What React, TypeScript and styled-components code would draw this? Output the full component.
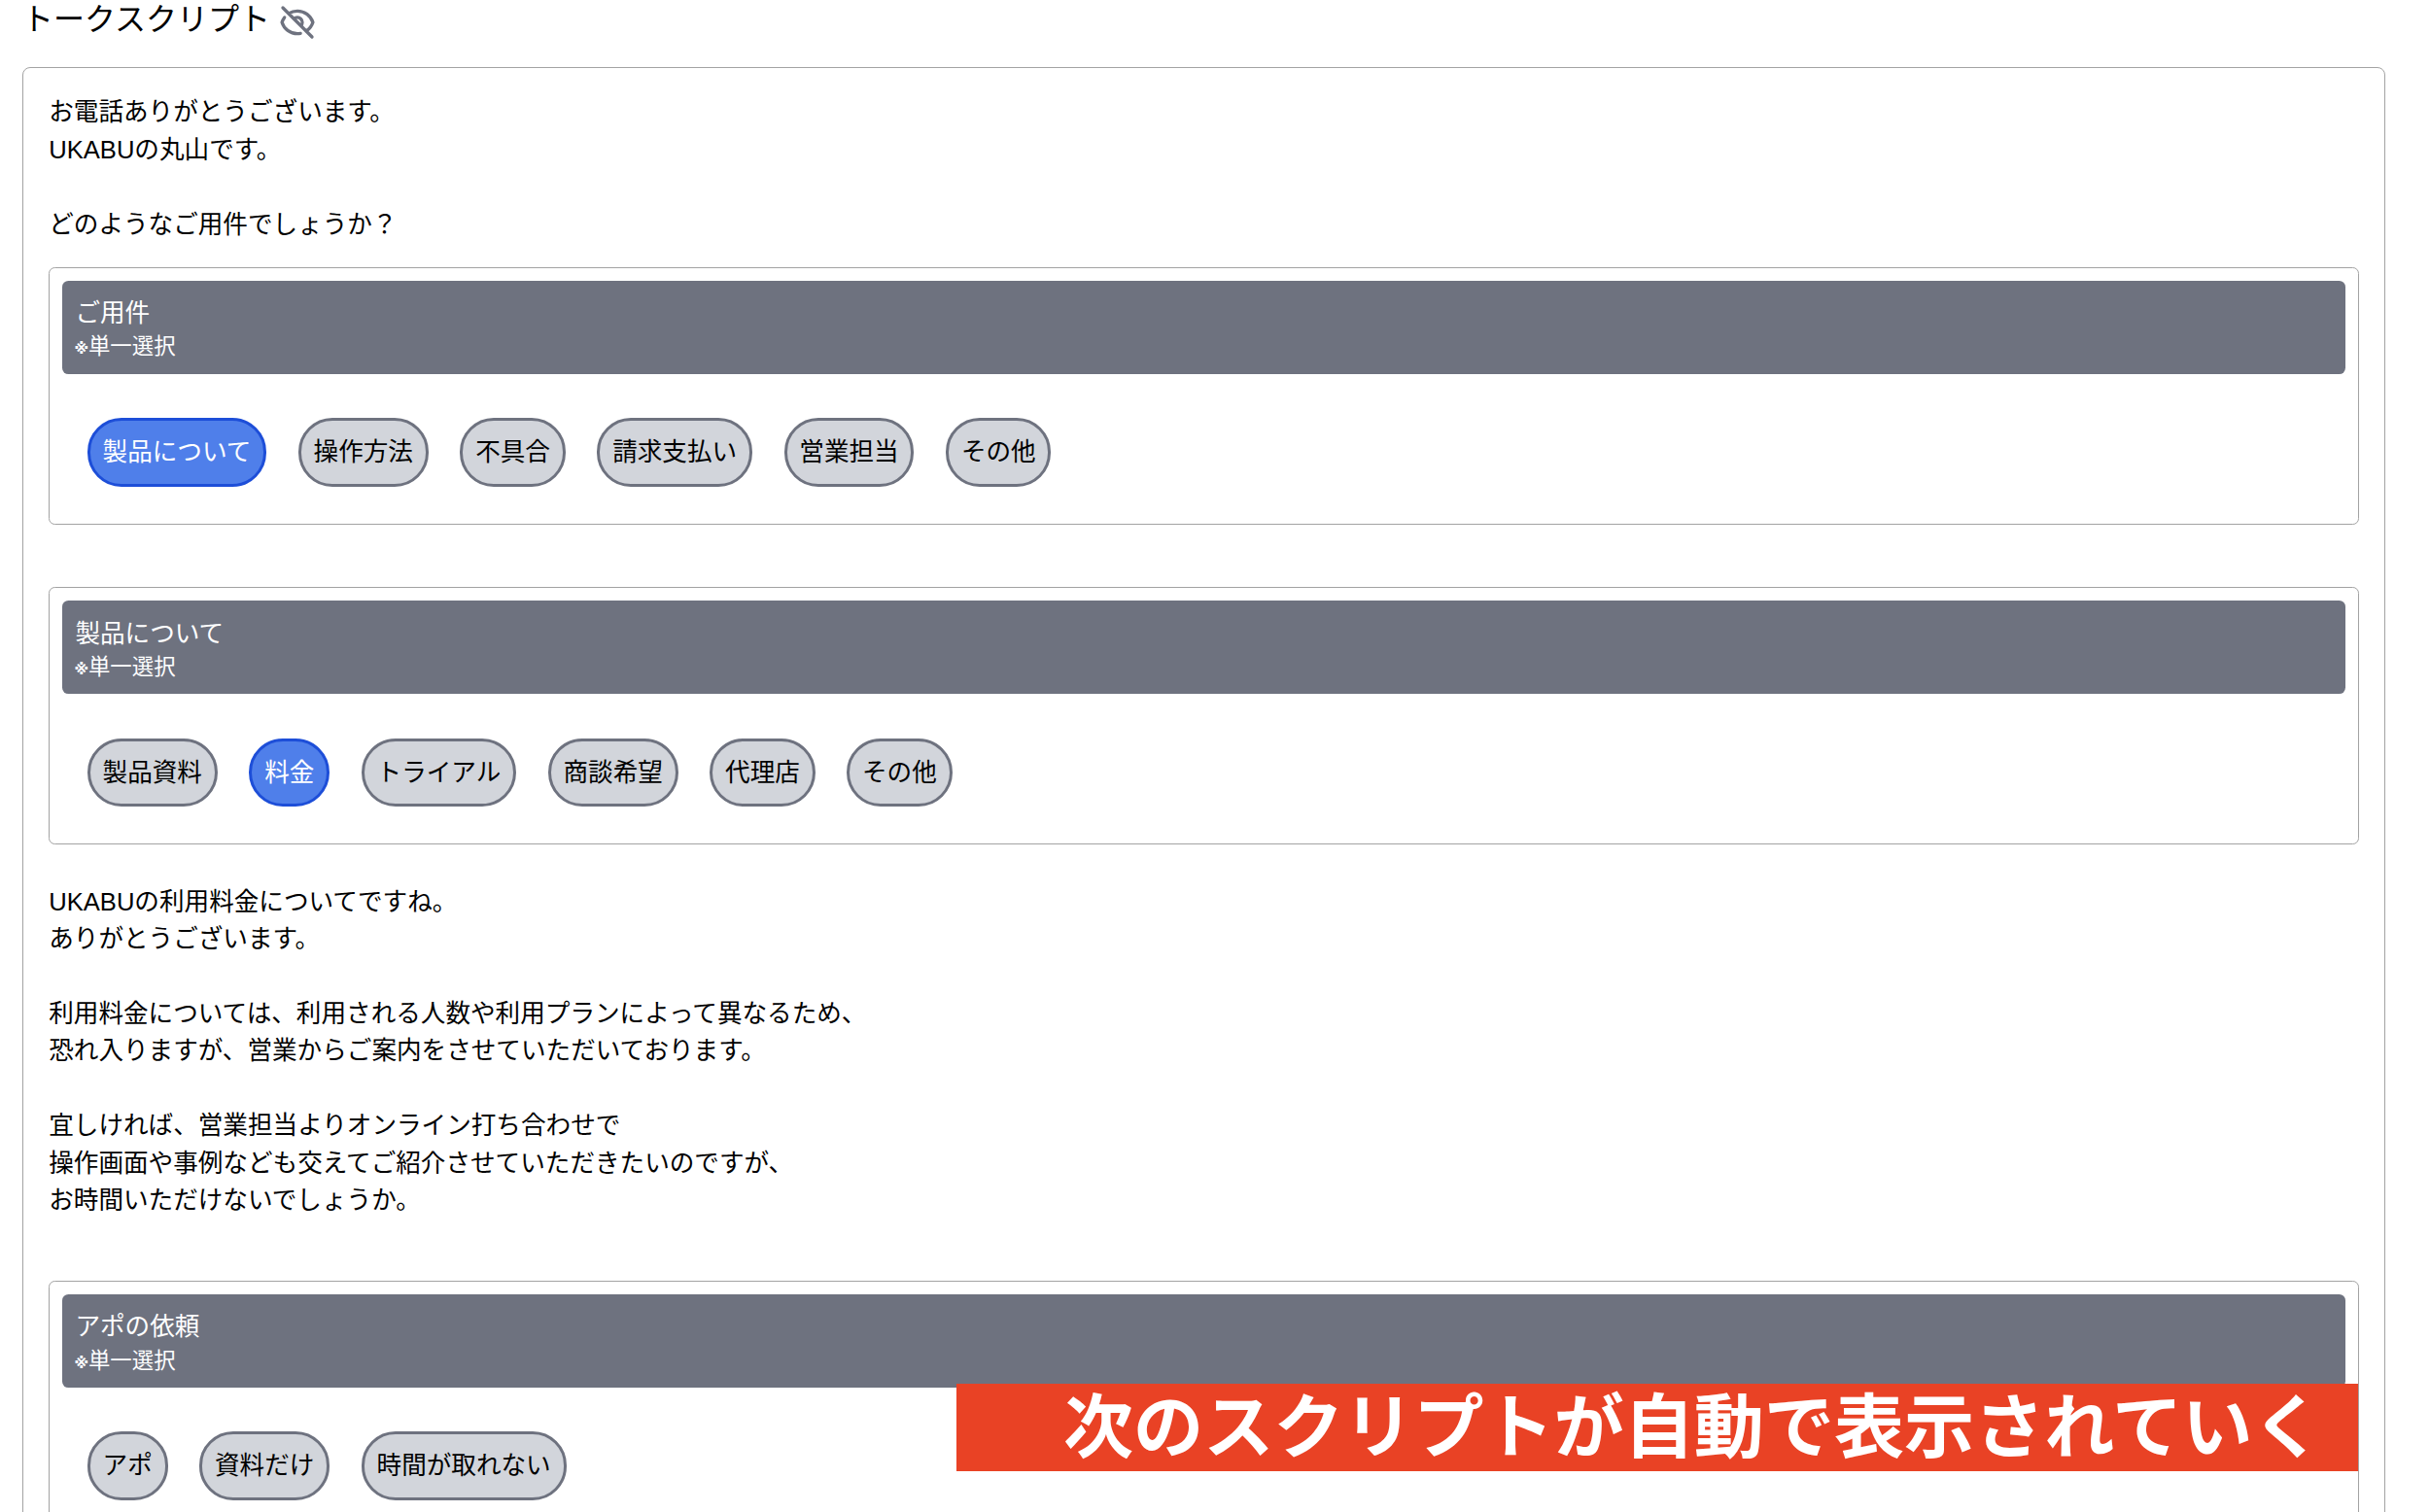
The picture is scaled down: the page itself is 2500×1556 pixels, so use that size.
import React from 'react';
import styled, {createGlobalStyle} from 'styled-components';

const GlobalStyle = createGlobalStyle`
    html, body {
        margin: 0;
        height: 100%;
        overflow: hidden;
        background: #fff;
    }
    body {
        font-family: 'Liberation Sans', 'Noto Sans CJK JP', sans-serif;
        font-size: 25.6px;
        line-height: 38.4px;
        color: #000;
    }
`;

interface Choice {
    label: string;
    selected?: boolean;
}

const Page = styled.div`
    position: relative;
    width: 2500px;
    height: 1556px;
    padding: 0 46px 0 23px;
    box-sizing: border-box;
    overflow: hidden;
`;

const TitleRow = styled.div`
    display: flex;
    align-items: flex-start;
    height: 69px;
    gap: 8px;
`;

const Title = styled.h1`
    margin: 0;
    font-size: 32px;
    line-height: 40px;
    font-weight: 400;
`;

const EyeIcon = styled.svg`
    width: 40px;
    height: 40px;
    margin-top: 3px;
    color: #6e727f;
`;

const ScriptCard = styled.div`
    border: 1.6px solid #a3a3a3;
    border-radius: 8px;
    padding: 26.4px 25.6px 25.6px;
`;

const ScriptText = styled.div<{$top?: number; $bottom?: number}>`
    white-space: pre-line;
    padding-left: 0.6px;
    margin-top: ${props => props.$top || 0}px;
    margin-bottom: ${props => props.$bottom || 0}px;
`;

const QuestionCard = styled.section`
    border: 1.6px solid #a3a3a3;
    border-radius: 6.4px;
    padding: 12.8px 13.6px 38px;

    & + & {
        margin-top: 64.8px;
    }
`;

const QuestionHeader = styled.header`
    background: #6e727f;
    color: #fff;
    border-radius: 6.4px;
    padding: 14.4px 13.2px 0;
    height: 96px;
    box-sizing: border-box;
`;

const QuestionName = styled.div`
    font-size: 25.6px;
    line-height: 38.4px;
`;

const QuestionNote = styled.div`
    font-size: 22.4px;
    line-height: 32px;
`;

const NoteMark = styled.span`
    font-family: 'DejaVu Sans', sans-serif;
    font-size: 15px;
    font-weight: 700;
    margin-left: -1px;
`;

const Choices = styled.div`
    display: flex;
    gap: 32.6px;
    margin-top: 45.6px;
    padding-left: 25.6px;
`;

const Pill = styled.button<{$selected?: boolean}>`
    font: inherit;
    height: 70.4px;
    padding: 12.8px;
    box-sizing: border-box;
    border-radius: 35px;
    border: 3.2px solid ${props => (props.$selected ? '#1d4ed8' : '#6e727f')};
    background: ${props => (props.$selected ? '#4f7fea' : '#d2d5db')};
    color: ${props => (props.$selected ? '#fff' : '#000')};
`;

const Caption = styled.div`
    position: absolute;
    left: 984px;
    top: 1424px;
    width: 1442px;
    height: 90px;
    padding-left: 110px;
    box-sizing: border-box;
    display: flex;
    align-items: center;
    background: #e94225;
    color: #fff;
    font-size: 72.1px;
    line-height: 90px;
    font-weight: 700;
    white-space: nowrap;
`;

const Question = (props: {name: string; choices: Choice[]}) => (
    <QuestionCard>
        <QuestionHeader>
            <QuestionName>{props.name}</QuestionName>
            <QuestionNote><NoteMark>{'※'}</NoteMark>{'単一選択'}</QuestionNote>
        </QuestionHeader>
        <Choices>
            {props.choices.map(choice => (
                <Pill key={choice.label} $selected={choice.selected}>{choice.label}</Pill>
            ))}
        </Choices>
    </QuestionCard>
);

const App = () => (
    <Page>
        <GlobalStyle/>
        <TitleRow>
            <Title>{'トークスクリプト'}</Title>
            <EyeIcon viewBox='0 0 24 24' fill='none' stroke='currentColor' strokeWidth={2} strokeLinecap='round' strokeLinejoin='round'>
                <path d='M13.875 18.825A10.05 10.05 0 0112 19c-4.478 0-8.268-2.943-9.543-7a9.97 9.97 0 011.563-3.029m5.858.908a3 3 0 114.243 4.243M9.878 9.878l4.242 4.242M9.88 9.88l-3.29-3.29m7.532 7.532l3.29 3.29M3 3l3.59 3.59m0 0A9.953 9.953 0 0112 5c4.478 0 8.268 2.943 9.543 7a10.025 10.025 0 01-4.132 5.411m0 0L21 21'/>
            </EyeIcon>
        </TitleRow>
        <ScriptCard>
            <ScriptText $bottom={24.8}>
                {'お電話ありがとうございます。\nUKABUの丸山です。\n\nどのようなご用件でしょうか？'}
            </ScriptText>
            <Question
                name='ご用件'
                choices={[
                    {label: '製品について', selected: true},
                    {label: '操作方法'},
                    {label: '不具合'},
                    {label: '請求支払い'},
                    {label: '営業担当'},
                    {label: 'その他'},
                ]}
            />
            <Question
                name='製品について'
                choices={[
                    {label: '製品資料'},
                    {label: '料金', selected: true},
                    {label: 'トライアル'},
                    {label: '商談希望'},
                    {label: '代理店'},
                    {label: 'その他'},
                ]}
            />
            <ScriptText $top={39.6} $bottom={63.6}>
                {'UKABUの利用料金についてですね。\nありがとうございます。\n\n利用料金については、利用される人数や利用プランによって異なるため、\n恐れ入りますが、営業からご案内をさせていただいております。\n\n宜しければ、営業担当よりオンライン打ち合わせで\n操作画面や事例なども交えてご紹介させていただきたいのですが、\nお時間いただけないでしょうか。'}
            </ScriptText>
            <Question
                name='アポの依頼'
                choices={[
                    {label: 'アポ'},
                    {label: '資料だけ'},
                    {label: '時間が取れない'},
                ]}
            />
        </ScriptCard>
        <Caption>{'次のスクリプトが自動で表示されていく'}</Caption>
    </Page>
);

export default App;
